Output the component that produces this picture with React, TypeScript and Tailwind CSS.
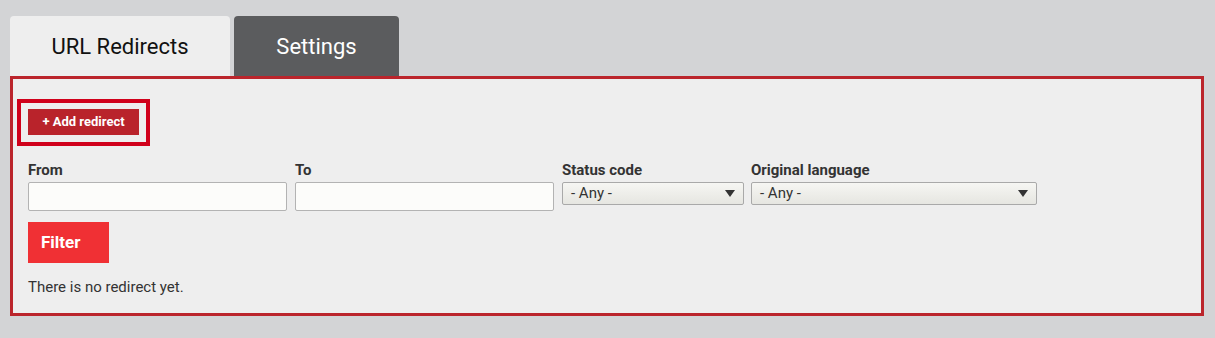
import React from "react";

const SelectBox = ({ width }: { width: string }) => {
  return (
    <div
      className={`${width} h-[23px] flex items-center justify-between rounded-[2px] border border-[#a9a9a9] bg-gradient-to-b from-[#f6f6f3] to-[#e6e6e1] pl-[8px] pr-[8px] text-[15px] text-[#333]`}
    >
      <span>- Any -</span>
      <svg width="10" height="7" viewBox="0 0 10 7">
        <path d="M0 0 L10 0 L5 7 Z" fill="#333" />
      </svg>
    </div>
  );
};

const App = () => {
  return (
    <div
      className="w-[1215px] h-[338px] bg-[#d3d4d6] pt-[16px] px-[10px]"
      style={{ fontFamily: "Roboto, 'Liberation Sans', sans-serif" }}
    >
      {/* tabs */}
      <div className="flex gap-[4px] h-[60px]">
        <div className="w-[220px] h-full rounded-t-[4px] bg-[#eeeeee] flex items-center justify-center text-[22px] text-[#111]">
          URL Redirects
        </div>
        <div className="w-[165px] h-full rounded-t-[4px] bg-[#5b5c5e] flex items-center justify-center text-[22px] text-white">
          Settings
        </div>
      </div>

      {/* panel */}
      <div className="w-[1194px] h-[240px] border-[3px] border-[#bb252c] bg-[#eeeeee] pt-[20px] pl-[4px]">
        <div className="inline-block border-4 border-[#d0011b] px-[7px] pt-[6px] pb-[7px]">
          <button className="w-[111px] h-[26px] bg-[#b9232b] text-white text-[13px] font-bold">
            + Add redirect
          </button>
        </div>

        <div className="ml-[11px] mt-[14px]">
          <div className="flex text-[15px] text-[#333]">
            <div className="w-[259px] mr-[8px]">
              <div className="h-[20px] font-bold mb-[2px] leading-[20px]">From</div>
              <div className="h-[29px] rounded-[2px] border border-[#b3b3b3] bg-[#fcfcfa]" />
            </div>
            <div className="w-[259px] mr-[8px]">
              <div className="h-[20px] font-bold mb-[2px] leading-[20px]">To</div>
              <div className="h-[29px] rounded-[2px] border border-[#b3b3b3] bg-[#fcfcfa]" />
            </div>
            <div className="mr-[7px]">
              <div className="h-[20px] font-bold mb-[2px] leading-[20px]">Status code</div>
              <SelectBox width="w-[182px]" />
            </div>
            <div>
              <div className="h-[20px] font-bold mb-[2px] leading-[20px]">Original language</div>
              <SelectBox width="w-[286px]" />
            </div>
          </div>

          <button className="mt-[11px] w-[81px] h-[41px] bg-[#f03034] text-white text-[17px] font-bold text-left pl-[13px]">
            Filter
          </button>

          <p className="mt-[14px] text-[15px] leading-[20px] text-[#333]">There is no redirect yet.</p>
        </div>
      </div>
    </div>
  );
};

export default App;
